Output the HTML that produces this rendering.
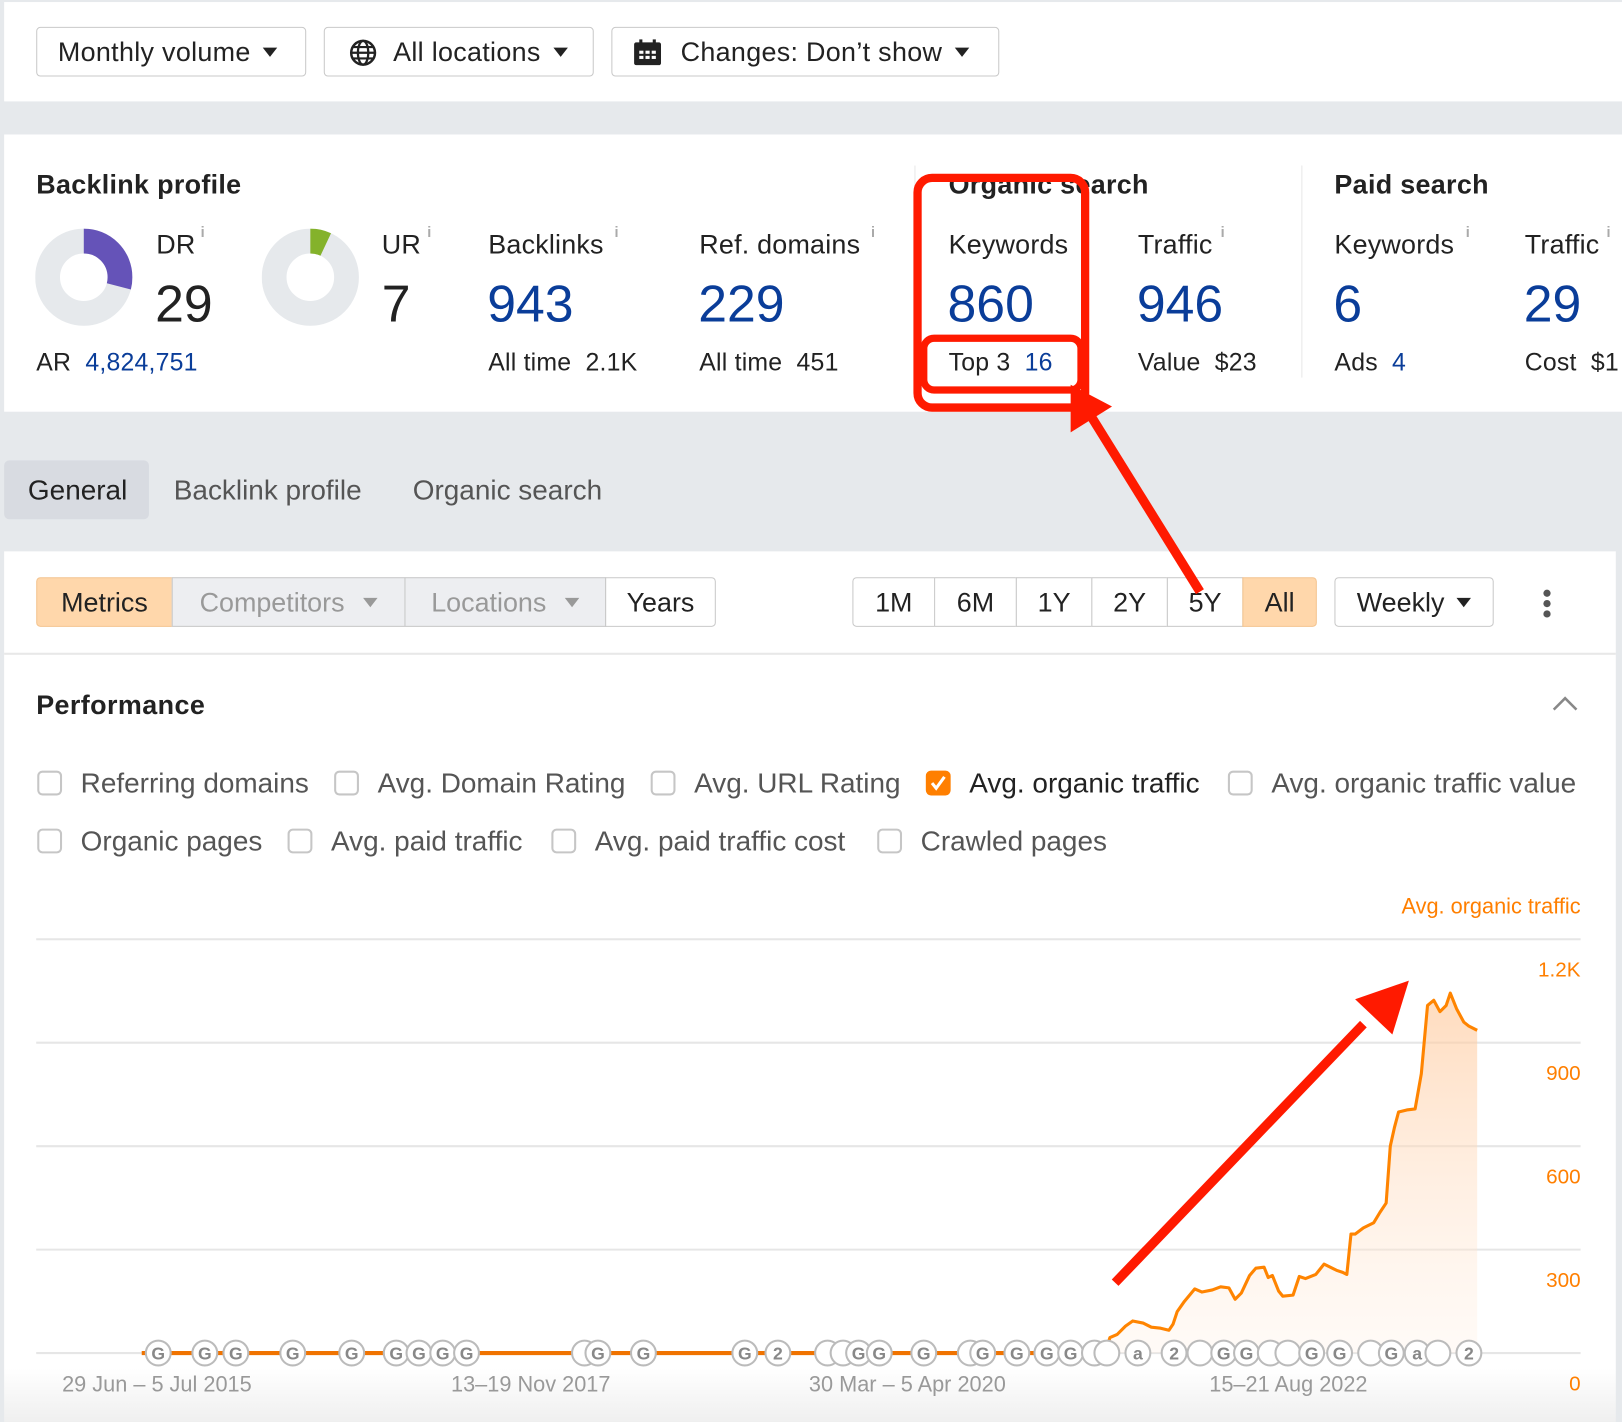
<!DOCTYPE html>
<html><head><meta charset="utf-8">
<style>
*{box-sizing:border-box;margin:0;padding:0}
html,body{width:1622px;height:1422px;overflow:hidden;background:#e6e9ec}
body{font-family:"Liberation Sans",Arial,sans-serif;color:#222}
#s{position:absolute;left:0;top:0;width:1568px;height:1375px;transform:scale(1.03444);transform-origin:0 0;background:#e6e9ec}
.a{position:absolute}
.btn{position:absolute;top:26px;height:48px;border:1px solid #c9c9c9;border-radius:4px;background:#fff;font-size:26px;letter-spacing:.3px;line-height:46px;padding-left:20px;color:#222;white-space:nowrap}
.tri{display:inline-block;width:0;height:0;border-left:7px solid transparent;border-right:7px solid transparent;border-top:9px solid #222;vertical-align:middle;margin-left:12px;position:relative;top:-2px}
.h{font-size:26px;font-weight:bold;color:#222}
.lbl{font-size:26px;color:#222;letter-spacing:.2px}
.sup{position:absolute;font-size:14px;color:#aaa;font-weight:bold}
.big{font-size:50px;color:#0a3d99}
.sub{font-size:24px;color:#222;letter-spacing:.2px}
.sub b{font-weight:normal;color:#0a3d99}
.seg{position:absolute;top:558px;height:48px;border:1px solid #c9c9c9;font-size:26px;line-height:46px;text-align:center;background:#fff}
.cb{position:absolute;width:24px;height:24px;border:2px solid #c6c6c6;border-radius:5px;background:#fff}
.ct{position:absolute;font-size:27px;color:#555}
.yl{position:absolute;right:40px;font-size:20px;color:#ff7f00}
.xl{position:absolute;top:1327px;font-size:21px;color:#999}
.tab{position:absolute;top:459px;font-size:27px;color:#555}
</style></head><body><div id="s">
<div class="a" style="left:4px;top:2px;width:1564px;height:96px;background:#fff"></div>
<div class="btn" style="left:35px;width:261px">Monthly volume<span class="tri"></span></div>
<div class="btn" style="left:313px;width:261px;padding-left:66px">All locations<span class="tri"></span>
<svg class="a" style="left:24px;top:11px" width="26" height="26" viewBox="0 0 26 26"><circle cx="13" cy="13" r="11.5" fill="none" stroke="#222" stroke-width="2.4"/><ellipse cx="13" cy="13" rx="5" ry="11.5" fill="none" stroke="#222" stroke-width="2.2"/><line x1="1.5" y1="13" x2="24.5" y2="13" stroke="#222" stroke-width="2.2"/><line x1="3.5" y1="7.5" x2="22.5" y2="7.5" stroke="#222" stroke-width="2"/><line x1="3.5" y1="18.5" x2="22.5" y2="18.5" stroke="#222" stroke-width="2"/></svg></div>
<div class="btn" style="left:591px;width:375px;padding-left:66px">Changes: Don’t show<span class="tri"></span>
<svg class="a" style="left:20px;top:11px" width="28" height="26" viewBox="0 0 28 26"><rect x="1" y="3" width="26" height="22" rx="2" fill="#222"/><rect x="6" y="0" width="3" height="6" fill="#222"/><rect x="19" y="0" width="3" height="6" fill="#222"/><g fill="#fff"><rect x="6" y="11" width="4" height="3"/><rect x="12" y="11" width="4" height="3"/><rect x="18" y="11" width="4" height="3"/><rect x="6" y="16" width="4" height="3"/><rect x="12" y="16" width="4" height="3"/><rect x="18" y="16" width="4" height="3"/></g></svg></div>

<div class="a" style="left:4px;top:130px;width:1564px;height:268px;background:#fff"></div>
<div class="a h" style="left:35px;top:163px;letter-spacing:.3px">Backlink profile</div>
<svg class="a" style="left:34px;top:221px" width="94" height="94" viewBox="0 0 94 94"><circle cx="47" cy="47" r="35" fill="none" stroke="#e6e9ec" stroke-width="24"/><circle cx="47" cy="47" r="35" fill="none" stroke="#6553b8" stroke-width="24" stroke-dasharray="63.8 300" transform="rotate(-90 47 47)"/></svg>
<div class="a lbl" style="left:151px;top:221px">DR</div><div class="sup" style="left:194px;top:216px">i</div>
<div class="a" style="left:150px;top:265px;font-size:50px;color:#222">29</div>
<div class="a sub" style="left:35px;top:337px">AR&nbsp; <span style="color:#0a3d99">4,824,751</span></div>
<svg class="a" style="left:253px;top:221px" width="94" height="94" viewBox="0 0 94 94"><circle cx="47" cy="47" r="35" fill="none" stroke="#e6e9ec" stroke-width="24"/><circle cx="47" cy="47" r="35" fill="none" stroke="#84b22b" stroke-width="24" stroke-dasharray="15.4 300" transform="rotate(-90 47 47)"/></svg>
<div class="a lbl" style="left:369px;top:221px">UR</div><div class="sup" style="left:413px;top:216px">i</div>

<div class="a" style="left:369px;top:265px;font-size:50px;color:#222">7</div>

<div class="a lbl" style="left:472px;top:221px">Backlinks</div><div class="sup" style="left:594px;top:216px">i</div>
<div class="a big" style="left:471px;top:265px">943</div>
<div class="a sub" style="left:472px;top:337px">All time&nbsp; 2.1K</div>
<div class="a lbl" style="left:676px;top:221px">Ref. domains</div><div class="sup" style="left:842px;top:216px">i</div>
<div class="a big" style="left:675px;top:265px">229</div>
<div class="a sub" style="left:676px;top:337px">All time&nbsp; 451</div>

<div class="a" style="left:884px;top:160px;width:1px;height:205px;background:#e8e8e8"></div>
<div class="a h" style="left:917px;top:163px;letter-spacing:.3px">Organic search</div>
<div class="a lbl" style="left:917px;top:221px">Keywords</div>
<div class="a big" style="left:916px;top:265px">860</div>
<div class="a sub" style="left:917px;top:337px">Top 3&nbsp; <b>16</b></div>
<div class="a lbl" style="left:1100px;top:221px">Traffic</div><div class="sup" style="left:1180px;top:216px">i</div>
<div class="a big" style="left:1099px;top:265px">946</div>
<div class="a sub" style="left:1100px;top:337px">Value&nbsp; $23</div>
<div class="a" style="left:1258px;top:160px;width:1px;height:205px;background:#e8e8e8"></div>
<div class="a h" style="left:1290px;top:163px;letter-spacing:.3px">Paid search</div>
<div class="a lbl" style="left:1290px;top:221px">Keywords</div><div class="sup" style="left:1417px;top:216px">i</div>
<div class="a big" style="left:1289px;top:265px">6</div>
<div class="a sub" style="left:1290px;top:337px">Ads&nbsp; <b>4</b></div>
<div class="a lbl" style="left:1474px;top:221px">Traffic</div><div class="sup" style="left:1553px;top:216px">i</div>
<div class="a big" style="left:1473px;top:265px">29</div>
<div class="a sub" style="left:1474px;top:337px;white-space:nowrap">Cost&nbsp; $1</div>

<div class="a" style="left:4px;top:445px;width:140px;height:57px;background:#d8dbe1;border-radius:5px"></div>
<div class="tab" style="left:27px;color:#222">General</div>
<div class="tab" style="left:168px">Backlink profile</div>
<div class="tab" style="left:399px">Organic search</div>

<div class="a" style="left:4px;top:533px;width:1558px;height:842px;background:linear-gradient(#fff 0,#fff 790px,#efefef 842px)"></div>
<div class="a" style="left:4px;top:631px;width:1558px;height:2px;background:#e8e8e8"></div>
<div class="seg" style="left:35px;width:132px;background:#ffd7ab;border-color:#f4c48f;border-radius:4px 0 0 4px">Metrics</div>
<div class="seg" style="left:166px;width:226px;background:#edeef1;color:#999">Competitors<span class="tri" style="border-top-color:#999;margin-left:18px"></span></div>
<div class="seg" style="left:391px;width:195px;background:#edeef1;color:#999">Locations<span class="tri" style="border-top-color:#999;margin-left:18px"></span></div>
<div class="seg" style="left:585px;width:107px;border-radius:0 4px 4px 0">Years</div>
<div class="seg" style="left:824px;width:80px;border-radius:4px 0 0 4px">1M</div>
<div class="seg" style="left:903px;width:80px">6M</div>
<div class="seg" style="left:982px;width:74px">1Y</div>
<div class="seg" style="left:1055px;width:74px">2Y</div>
<div class="seg" style="left:1128px;width:74px">5Y</div>
<div class="seg" style="left:1201px;width:72px;background:#ffd7ab;border-color:#f4c48f;border-radius:0 4px 4px 0">All</div>
<div class="seg" style="left:1290px;width:154px;border-radius:4px">Weekly<span class="tri"></span></div>
<div class="a" style="left:1492px;top:570px;width:7px;height:7px;border-radius:50%;background:#555;box-shadow:0 10px 0 #555,0 20px 0 #555"></div>

<div class="a h" style="left:35px;top:666px;letter-spacing:.4px">Performance</div>
<svg class="a" style="left:1500px;top:672px" width="26" height="16"><polyline points="2,14 13,3 24,14" fill="none" stroke="#888" stroke-width="2.5"/></svg>

<div class="cb" style="left:36px;top:745px"></div><div class="ct" style="left:78px;top:742px">Referring domains</div>
<div class="cb" style="left:323px;top:745px"></div><div class="ct" style="left:365px;top:742px">Avg. Domain Rating</div>
<div class="cb" style="left:629px;top:745px"></div><div class="ct" style="left:671px;top:742px">Avg. URL Rating</div>
<div class="cb" style="left:895px;top:745px;background:#ff7f00;border-color:#ff7f00"><svg width="20" height="20" style="position:absolute;left:0;top:0"><polyline points="4,10 8,15 16,4" fill="none" stroke="#fff" stroke-width="3"/></svg></div><div class="ct" style="left:937px;top:742px;color:#222">Avg. organic traffic</div>
<div class="cb" style="left:1187px;top:745px"></div><div class="ct" style="left:1229px;top:742px">Avg. organic traffic value</div>
<div class="cb" style="left:36px;top:801px"></div><div class="ct" style="left:78px;top:798px">Organic pages</div>
<div class="cb" style="left:278px;top:801px"></div><div class="ct" style="left:320px;top:798px">Avg. paid traffic</div>
<div class="cb" style="left:533px;top:801px"></div><div class="ct" style="left:575px;top:798px">Avg. paid traffic cost</div>
<div class="cb" style="left:848px;top:801px"></div><div class="ct" style="left:890px;top:798px">Crawled pages</div>

<div class="yl" style="top:865px;font-size:21px">Avg. organic traffic</div>
<div class="yl" style="top:927px">1.2K</div>
<div class="yl" style="top:1027px">900</div>
<div class="yl" style="top:1127px">600</div>
<div class="yl" style="top:1227px">300</div>
<div class="yl" style="top:1327px">0</div>
<div class="xl" style="left:60px">29 Jun – 5 Jul 2015</div>
<div class="xl" style="left:436px">13–19 Nov 2017</div>
<div class="xl" style="left:782px">30 Mar – 5 Apr 2020</div>
<div class="xl" style="left:1169px">15–21 Aug 2022</div>

<svg class="a" style="left:0;top:0" width="1568" height="1375" viewBox="0 0 1568 1375">
<defs><linearGradient id="g" x1="0" y1="0" x2="0" y2="1"><stop offset="0" stop-color="#ffc89a" stop-opacity=".65"/><stop offset="1" stop-color="#fff0e4" stop-opacity=".3"/></linearGradient></defs>
<g stroke="#e6e6e6" stroke-width="2"><line x1="35" y1="908" x2="1528" y2="908"/><line x1="35" y1="1008" x2="1528" y2="1008"/><line x1="35" y1="1108" x2="1528" y2="1108"/><line x1="35" y1="1208" x2="1528" y2="1208"/><line x1="35" y1="1308" x2="1528" y2="1308"/></g>
<polygon fill="url(#g)" points="1068,1308 1073,1293 1080,1290 1088,1282 1095,1277 1105,1279 1113,1283 1122,1284 1130,1286 1134,1280 1138,1268 1145,1258 1155,1246 1162,1249 1172,1247 1180,1244 1188,1245 1194,1256 1200,1250 1208,1233 1214,1226 1222,1225 1226,1235 1230,1233 1236,1248 1240,1253 1250,1252 1256,1234 1262,1236 1272,1232 1280,1222 1292,1228 1298,1230 1302,1232 1306,1193 1310,1193 1318,1187 1328,1182 1334,1172 1340,1163 1344,1108 1348,1090 1352,1075 1360,1073 1368,1072 1374,1038 1380,972 1386,967 1392,978 1398,972 1402,960 1408,975 1415,988 1420,992 1428,996 1428,1308"/>
<polyline fill="none" stroke="#ff8400" stroke-width="3" stroke-linejoin="round" points="1068,1308 1073,1293 1080,1290 1088,1282 1095,1277 1105,1279 1113,1283 1122,1284 1130,1286 1134,1280 1138,1268 1145,1258 1155,1246 1162,1249 1172,1247 1180,1244 1188,1245 1194,1256 1200,1250 1208,1233 1214,1226 1222,1225 1226,1235 1230,1233 1236,1248 1240,1253 1250,1252 1256,1234 1262,1236 1272,1232 1280,1222 1292,1228 1298,1230 1302,1232 1306,1193 1310,1193 1318,1187 1328,1182 1334,1172 1340,1163 1344,1108 1348,1090 1352,1075 1360,1073 1368,1072 1374,1038 1380,972 1386,967 1392,978 1398,972 1402,960 1408,975 1415,988 1420,992 1428,996"/>
<line x1="137" y1="1308" x2="1068" y2="1308" stroke="#f07300" stroke-width="4"/>
<g fill="#fff" stroke="#bbb" stroke-width="2" font-family="Liberation Sans,sans-serif" font-size="17" font-weight="bold">
<g>
<circle cx="153" cy="1308" r="12"/><circle cx="198" cy="1308" r="12"/><circle cx="228" cy="1308" r="12"/><circle cx="283" cy="1308" r="12"/><circle cx="340" cy="1308" r="12"/><circle cx="383" cy="1308" r="12"/><circle cx="405" cy="1308" r="12"/><circle cx="428" cy="1308" r="12"/><circle cx="451" cy="1308" r="12"/><circle cx="565" cy="1308" r="12"/><circle cx="578" cy="1308" r="12"/><circle cx="622" cy="1308" r="12"/><circle cx="720" cy="1308" r="12"/><circle cx="752" cy="1308" r="12"/><circle cx="800" cy="1308" r="12"/><circle cx="815" cy="1308" r="12"/><circle cx="830" cy="1308" r="12"/><circle cx="850" cy="1308" r="12"/><circle cx="893" cy="1308" r="12"/><circle cx="938" cy="1308" r="12"/><circle cx="950" cy="1308" r="12"/><circle cx="983" cy="1308" r="12"/><circle cx="1012" cy="1308" r="12"/><circle cx="1035" cy="1308" r="12"/><circle cx="1058" cy="1308" r="12"/><circle cx="1070" cy="1308" r="12"/><circle cx="1100" cy="1308" r="12"/><circle cx="1135" cy="1308" r="12"/><circle cx="1160" cy="1308" r="12"/><circle cx="1183" cy="1308" r="12"/><circle cx="1205" cy="1308" r="12"/><circle cx="1228" cy="1308" r="12"/><circle cx="1245" cy="1308" r="12"/><circle cx="1268" cy="1308" r="12"/><circle cx="1295" cy="1308" r="12"/><circle cx="1325" cy="1308" r="12"/><circle cx="1345" cy="1308" r="12"/><circle cx="1370" cy="1308" r="12"/><circle cx="1390" cy="1308" r="12"/><circle cx="1420" cy="1308" r="12"/>
</g>
<g fill="#888" stroke="none" text-anchor="middle">
<text x="153" y="1314">G</text><text x="198" y="1314">G</text><text x="228" y="1314">G</text><text x="283" y="1314">G</text><text x="340" y="1314">G</text><text x="383" y="1314">G</text><text x="405" y="1314">G</text><text x="428" y="1314">G</text><text x="451" y="1314">G</text><text x="578" y="1314">G</text><text x="622" y="1314">G</text><text x="720" y="1314">G</text><text x="752" y="1314">2</text><text x="830" y="1314">G</text><text x="850" y="1314">G</text><text x="893" y="1314">G</text><text x="950" y="1314">G</text><text x="983" y="1314">G</text><text x="1012" y="1314">G</text><text x="1035" y="1314">G</text><text x="1100" y="1314">a</text><text x="1135" y="1314">2</text><text x="1183" y="1314">G</text><text x="1205" y="1314">G</text><text x="1268" y="1314">G</text><text x="1295" y="1314">G</text><text x="1345" y="1314">G</text><text x="1370" y="1314">a</text><text x="1420" y="1314">2</text>
</g></g>
<rect x="887" y="172" width="162" height="222" rx="14" fill="none" stroke="#ff1a00" stroke-width="8"/>
<rect x="893" y="327" width="152" height="50" rx="10" fill="none" stroke="#ff1a00" stroke-width="7"/>
<line x1="1160" y1="572" x2="1052" y2="398" stroke="#ff1a00" stroke-width="9"/>
<polygon points="1035,372 1075,393 1035,418" fill="#ff1a00"/>
<line x1="1078" y1="1240" x2="1318" y2="990" stroke="#ff1a00" stroke-width="9"/>
<polygon points="1362,948 1346,1000 1310,966" fill="#ff1a00"/>
</svg>
</div></body></html>
